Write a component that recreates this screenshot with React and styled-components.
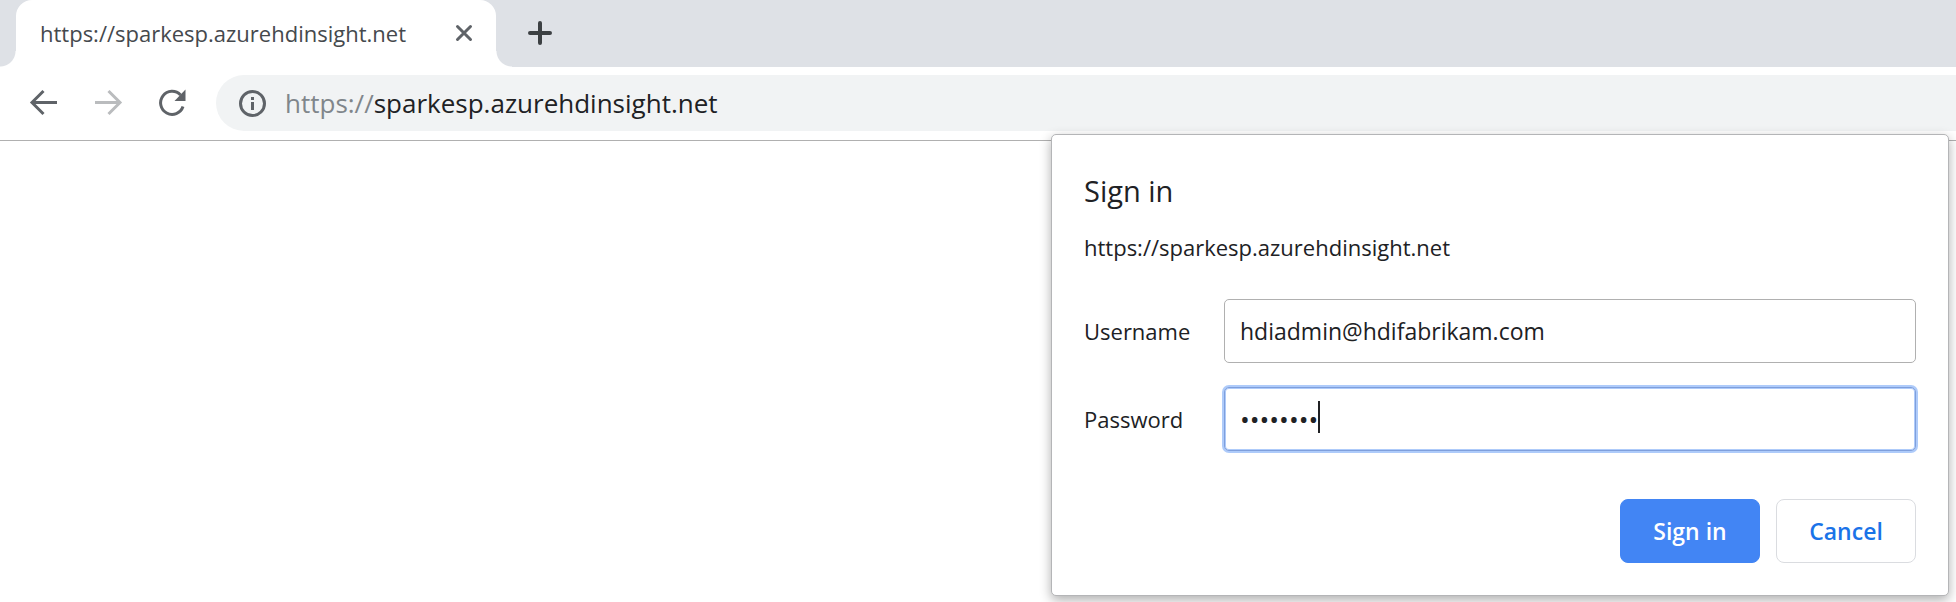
import React from "react";
import styled, { createGlobalStyle } from "styled-components";

const GlobalStyle = createGlobalStyle`
  *, *::before, *::after { box-sizing: border-box; }
  body {
    margin: 0;
    background: #ffffff;
    color: #202124;
    font-family: "Open Sans", "Noto Sans", sans-serif;
    font-size: 22px;
    line-height: 32px;
  }
  button, input { font: inherit; color: inherit; }
`;

const Page = styled.div`
  position: relative;
  display: flex;
  flex-direction: column;
  min-height: 100vh;
  overflow: hidden;
`;

const TabStrip = styled.header`
  display: flex;
  align-items: stretch;
  height: 67px;
  padding-left: 16px;
  background: #dee1e6;
`;

const Tab = styled.div`
  position: relative;
  display: flex;
  align-items: center;
  justify-content: space-between;
  width: 480px;
  padding: 0 20px 1px 24px;
  border-radius: 16px 16px 0 0;
  background: #ffffff;
  color: #45494d;

  &::before,
  &::after {
    content: "";
    position: absolute;
    bottom: 0;
    width: 16px;
    height: 16px;
  }
  &::before {
    right: 100%;
    background: radial-gradient(circle at 0 0, transparent 15px, #ffffff 16px);
  }
  &::after {
    left: 100%;
    background: radial-gradient(circle at 100% 0, transparent 15px, #ffffff 16px);
  }
`;

const TabTitle = styled.span`
  white-space: nowrap;
`;

const IconButton = styled.button`
  display: flex;
  align-items: center;
  justify-content: center;
  flex: none;
  width: ${(p) => p.$size}px;
  height: ${(p) => p.$size}px;
  padding: 0;
  border: 0;
  background: none;
  color: ${(p) => p.$color || "#5f6368"};
`;

const NewTabSlot = styled.div`
  display: flex;
  align-items: center;
  padding: 0 0 1px 28px;
`;

const Toolbar = styled.nav`
  display: flex;
  align-items: center;
  height: 74px;
  padding: 0 0 1px 28px;
  border-bottom: 1px solid #b0b0b0;
`;

const NavButtons = styled.div`
  display: flex;
  gap: 32px;
  margin-right: 28px;
`;

const AddressBar = styled.div`
  display: flex;
  align-items: center;
  flex: 1;
  height: 56px;
  padding-left: 21px;
  border-radius: 28px 0 0 28px;
  background: #f1f3f4;
  font-size: 26px;
  line-height: 40px;
`;

const Scheme = styled.label`
  margin-left: 16px;
  color: #80868b;
`;

const AddressInput = styled.input`
  flex: 1;
  min-width: 0;
  height: 40px;
  padding: 0;
  border: 0;
  outline: 0;
  background: transparent;
`;

const Dialog = styled.form`
  position: absolute;
  top: 134px;
  right: 7px;
  width: 898px;
  max-width: calc(100% - 14px);
  padding: 36px 32px 32px;
  border: 1px solid #b4b5b7;
  border-radius: 5px;
  background: #ffffff;
  box-shadow: 0 4px 12px rgba(0, 0, 0, 0.32);
`;

const Title = styled.h1`
  margin: 0 0 20px;
  font-size: 29px;
  font-weight: 400;
  line-height: 40px;
`;

const Origin = styled.p`
  margin: 0 0 36px;
`;

const Fields = styled.div`
  display: grid;
  grid-template-columns: 140px 1fr;
  align-items: center;
  row-gap: 24px;
`;

const InputWrap = styled.div`
  position: relative;
`;

const TextInput = styled.input`
  display: block;
  width: 100%;
  height: 64px;
  padding: 0 15px;
  border: 1px solid ${(p) => (p.$active ? "#7f9fdc" : "#b0b0b0")};
  border-radius: 5px;
  outline: 0;
  background: #ffffff;
  font-size: ${(p) => (p.type === "password" ? 26 : 23)}px;
  box-shadow: ${(p) =>
    p.$active ? "0 0 0 2px #aecbfa, inset 0 0 0 1px #aecbfa" : "none"};
`;

const Caret = styled.span`
  position: absolute;
  top: 14px;
  left: 94px;
  width: 2px;
  height: 32px;
  background: #202124;
`;

const Actions = styled.div`
  display: flex;
  justify-content: flex-end;
  gap: 16px;
  margin-top: 48px;
`;

const Button = styled.button`
  width: 140px;
  height: 64px;
  padding: 0;
  border: 1px solid ${(p) => (p.$primary ? "#4285f4" : "#dadce0")};
  border-radius: 8px;
  background: ${(p) => (p.$primary ? "#4285f4" : "#ffffff")};
  color: ${(p) => (p.$primary ? "#ffffff" : "#1a73e8")};
  font-size: 23px;
  font-weight: 600;
`;

const Arrow = ({ flip }) => (
  <svg width="32" height="32" viewBox="0 0 32 32" fill="none" stroke="currentColor" strokeWidth="3" aria-hidden="true">
    {flip ? (
      <path d="M3 15.500H28M16.500 4L28 15.500L16.500 27" />
    ) : (
      <path d="M29 15.500H4M15.500 4L4 15.500L15.500 27" />
    )}
  </svg>
);

const Reload = () => (
  <svg width="32" height="32" viewBox="0 0 32 32" fill="none" aria-hidden="true">
    <path d="M24.500 8A11.500 11.500 0 1 0 27 19.500" stroke="currentColor" strokeWidth="3" />
    <path d="M29.500 2.500V14H18.500Z" fill="currentColor" />
  </svg>
);

const Info = () => (
  <svg width="32" height="32" viewBox="0 0 32 32" fill="none" aria-hidden="true">
    <circle cx="15.500" cy="16.500" r="12" stroke="currentColor" strokeWidth="3" />
    <path d="M15.500 15V23M15.500 10V13" stroke="currentColor" strokeWidth="3" />
  </svg>
);

const Close = () => (
  <svg width="20" height="20" viewBox="0 0 20 20" stroke="currentColor" strokeWidth="3" strokeLinecap="round" aria-hidden="true">
    <path d="M3.500 3.500L16.500 16.500M16.500 3.500L3.500 16.500" />
  </svg>
);

const Plus = () => (
  <svg width="32" height="32" viewBox="0 0 32 32" stroke="currentColor" strokeWidth="4" strokeLinecap="round" aria-hidden="true">
    <path d="M16 6V26M6 16H26" />
  </svg>
);

export default function App() {
  return (
    <Page>
      <GlobalStyle />
      <TabStrip>
        <Tab>
          <TabTitle>https://sparkesp.azurehdinsight.net</TabTitle>
          <IconButton type="button" $size={24} aria-label="Close tab">
            <Close />
          </IconButton>
        </Tab>
        <NewTabSlot>
          <IconButton type="button" $size={32} $color="#3c4043" aria-label="New tab">
            <Plus />
          </IconButton>
        </NewTabSlot>
      </TabStrip>
      <Toolbar>
        <NavButtons>
          <IconButton type="button" $size={32} aria-label="Back">
            <Arrow />
          </IconButton>
          <IconButton type="button" $size={32} $color="#babcbe" aria-label="Forward">
            <Arrow flip />
          </IconButton>
          <IconButton type="button" $size={32} aria-label="Reload">
            <Reload />
          </IconButton>
        </NavButtons>
        <AddressBar>
          <IconButton type="button" $size={32} aria-label="View site information">
            <Info />
          </IconButton>
          <Scheme htmlFor="address">https://</Scheme>
          <AddressInput id="address" defaultValue="sparkesp.azurehdinsight.net" spellCheck={false} />
        </AddressBar>
      </Toolbar>
      <Dialog onSubmit={(e) => e.preventDefault()}>
        <Title>Sign in</Title>
        <Origin>https://sparkesp.azurehdinsight.net</Origin>
        <Fields>
          <label htmlFor="username">Username</label>
          <TextInput id="username" defaultValue="hdiadmin@hdifabrikam.com" spellCheck={false} />
          <label htmlFor="password">Password</label>
          <InputWrap>
            <TextInput id="password" type="password" defaultValue="password" $active />
            <Caret />
          </InputWrap>
        </Fields>
        <Actions>
          <Button type="submit" $primary>Sign in</Button>
          <Button type="button">Cancel</Button>
        </Actions>
      </Dialog>
    </Page>
  );
}
